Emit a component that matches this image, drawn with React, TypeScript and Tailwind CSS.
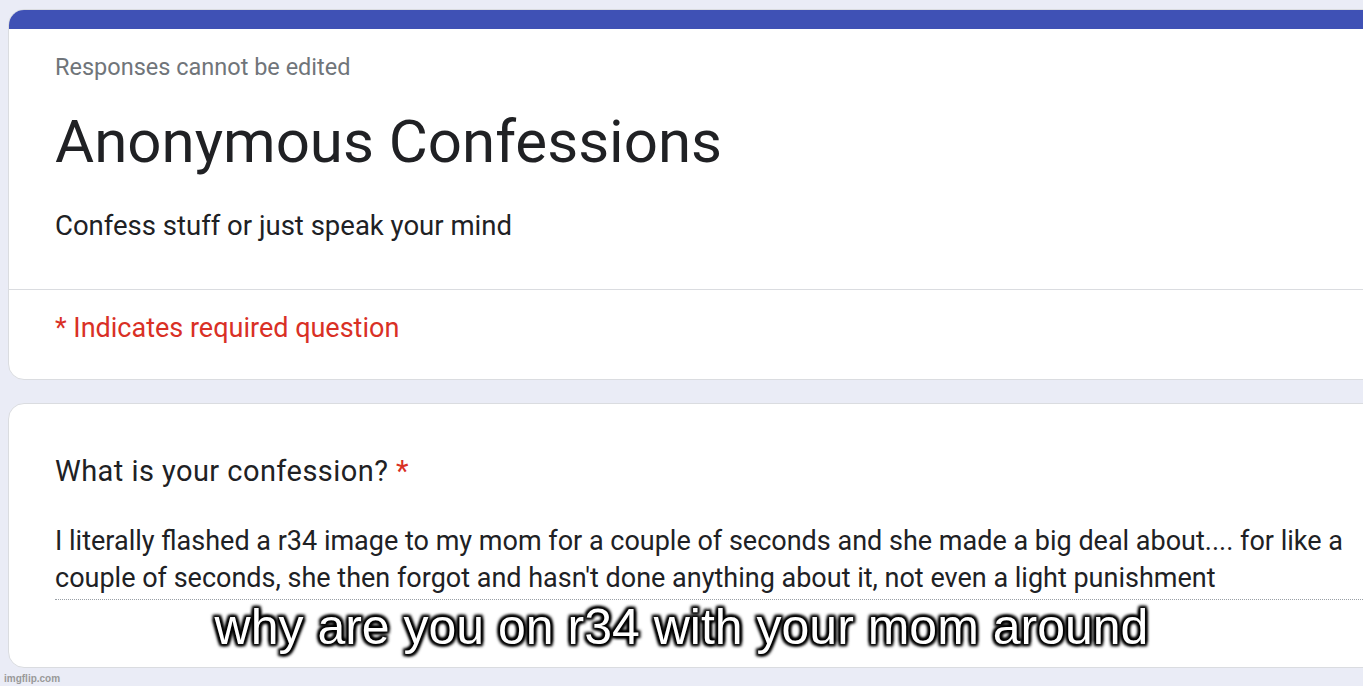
export default function App() {
  return (
    <div
      className="relative h-[686px] w-[1363px] overflow-hidden bg-[#eaecf6] text-[#202124]"
      style={{ fontFamily: "Roboto, 'Noto Sans', sans-serif" }}
    >
      <div className="flex w-[1420px] flex-col gap-[23px] pl-[8px] pt-[9px]">
        {/* Header card */}
        <div className="overflow-hidden rounded-[16px] border border-[#dadce0] bg-white">
          <div className="h-[19px] bg-[#3f51b5]" />
          <div className="px-[46px] pt-[24px] pb-[47px]">
            <div className="text-[23.5px] leading-[28px] text-[#70757a]">Responses cannot be edited</div>
            <h1 className="mt-[25px] text-[60px] leading-[72px]">Anonymous Confessions</h1>
            <div className="mt-[32px] text-[27.5px] leading-[32px]">Confess stuff or just speak your mind</div>
          </div>
          <div className="border-t border-[#dadce0] px-[46px] pt-[23px] pb-[36px]">
            <div className="text-[27px] leading-[30px] text-[#d93025]">* Indicates required question</div>
          </div>
        </div>

        {/* Question card */}
        <div className="rounded-[16px] border border-[#dadce0] bg-white px-[46px] pt-[51px] pb-[67px]">
          <div className="text-[29px] leading-[32px] tracking-[0.45px]">
            What is your confession? <span className="text-[#d93025]">*</span>
          </div>
          <div className="mt-[36px] border-b border-dotted border-[#9aa0a6] pb-[2px]">
            <p className="w-[1300px] text-[27px] leading-[37px]">
              I literally flashed a r34 image to my mom for a couple of seconds and she made a big deal about.... for like a couple of seconds, she then forgot and hasn't done anything about it, not even a light punishment
            </p>
          </div>
        </div>
      </div>

      {/* Meme caption */}
      <div
        className="absolute left-0 right-0 top-[597px] text-center text-[50px] leading-[60px] text-white [text-shadow:0_0_2px_#000,0_0_3px_#000,0_0_4px_#000,0_0_5px_#000,2px_2px_3px_#000,-2px_-2px_3px_#000,2px_-2px_3px_#000,-2px_2px_3px_#000]"
        style={{ fontFamily: "'Liberation Sans', Arial, sans-serif" }}
      >
        why are you on r34 with your mom around
      </div>

      <div
        className="absolute left-[4px] top-[671px] text-[10px] font-bold text-[#999]"
        style={{ fontFamily: "'Liberation Sans', Arial, sans-serif" }}
      >
        imgflip.com
      </div>
    </div>
  );
}
